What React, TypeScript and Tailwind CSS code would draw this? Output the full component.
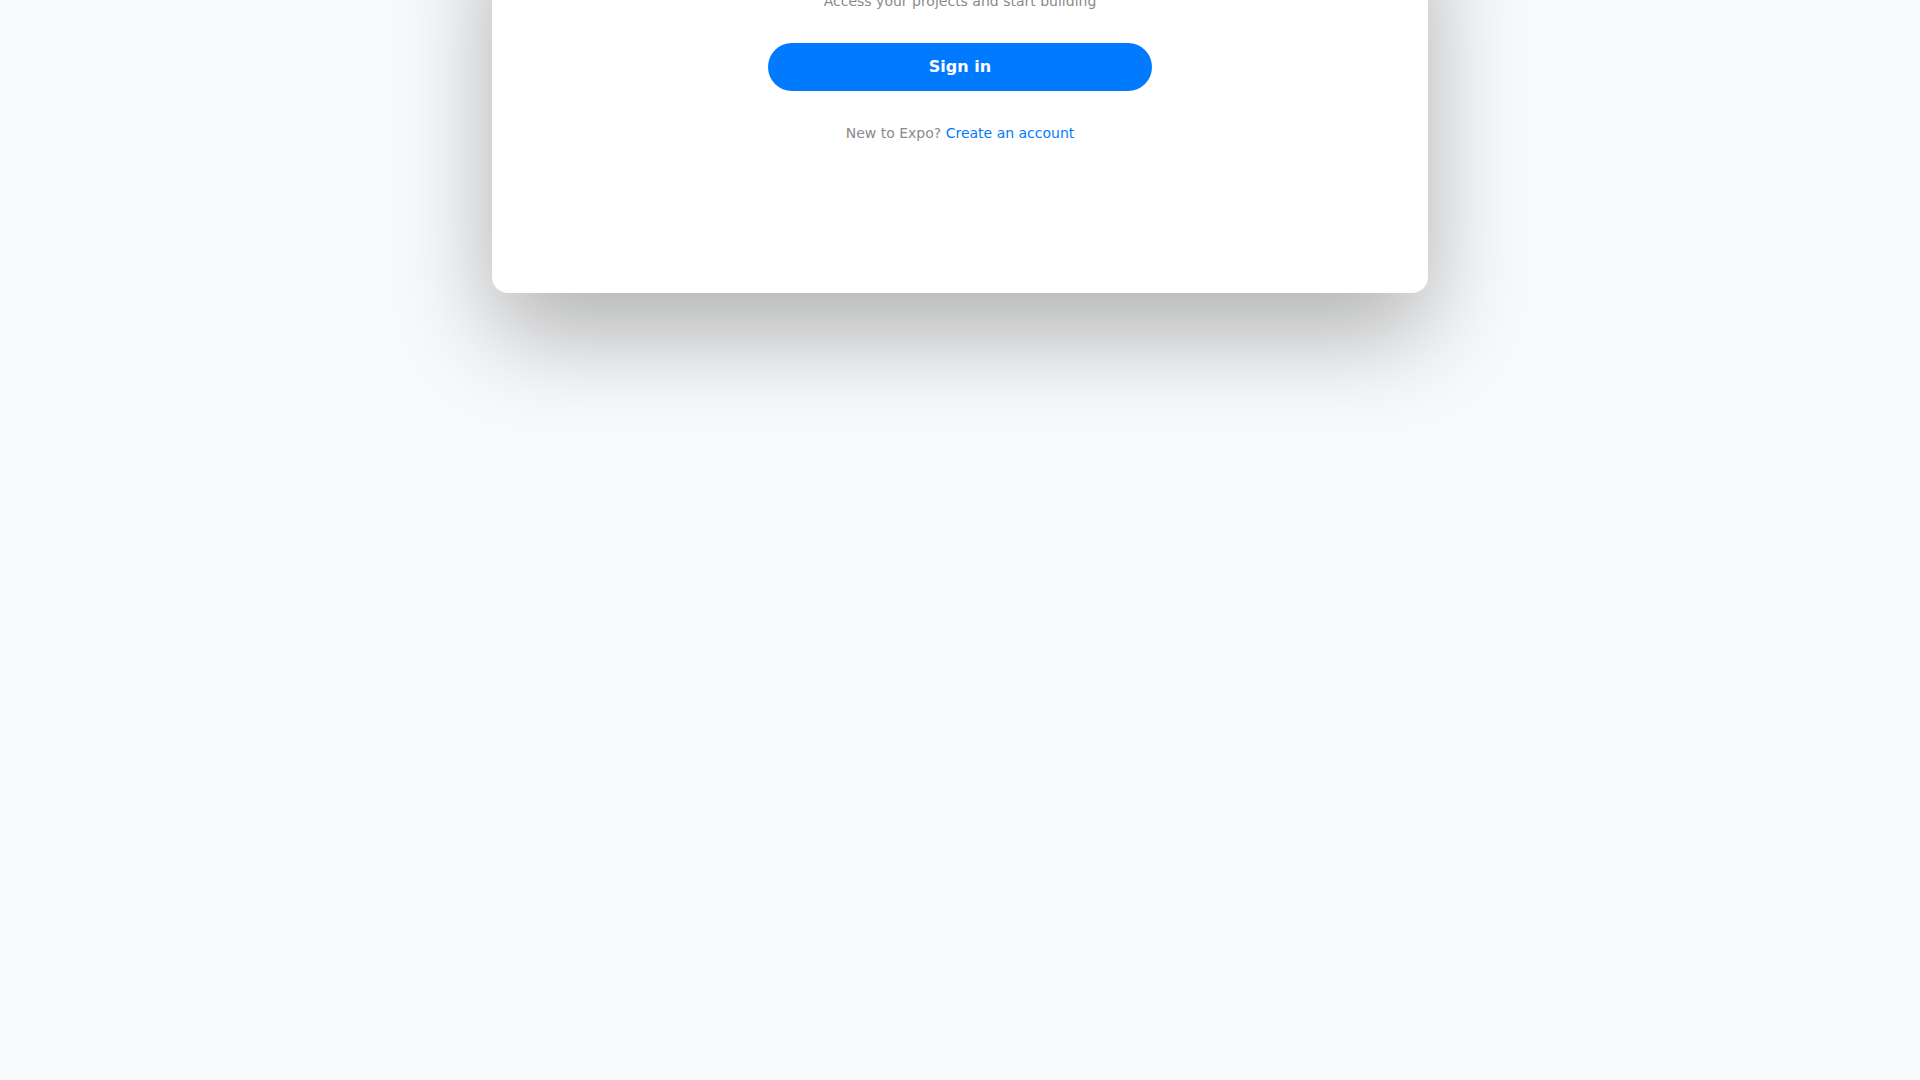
export default function App() {
  return (
    <div className="min-h-screen w-full overflow-hidden bg-[#f9fafb] font-['DejaVu_Sans',sans-serif]">
      <div className="mx-auto -mt-[101px] flex w-[936px] flex-col items-center rounded-2xl bg-white px-10 pt-12 pb-[150px] shadow-[0_40px_100px_rgba(0,0,0,0.3)]">
        {/* Header (scrolled above the viewport) */}
        <h1 className="mb-2 text-3xl font-bold text-[#111827]">Welcome back</h1>
        <p className="text-sm leading-5 text-[#8a8a8a]">Access your projects and start building</p>

        <button className="mt-8 h-12 w-[384px] rounded-full bg-[#007aff] text-base font-bold text-white">
          Sign in
        </button>

        <p className="mt-8 text-sm leading-5 text-[#8a8a8a]">
          New to Expo? <a className="text-[#007aff]">Create an account</a>
        </p>
      </div>
    </div>
  )
}
